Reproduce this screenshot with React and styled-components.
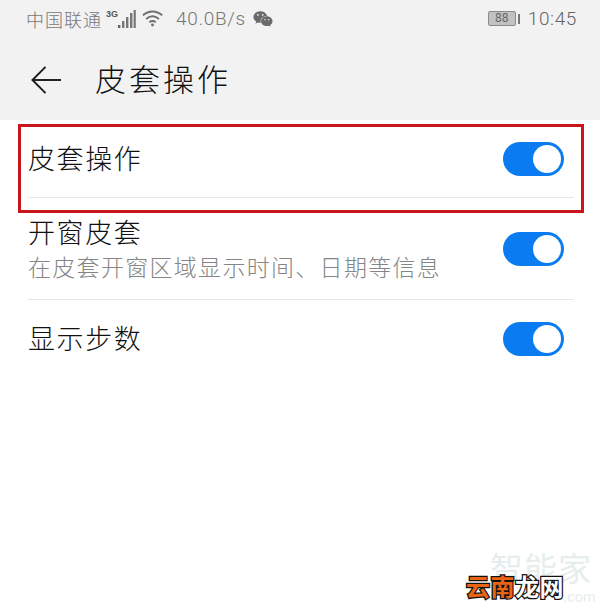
import React from "react";
import styled, { createGlobalStyle } from "styled-components";
import { FaWeixin } from "react-icons/fa";

const GlobalStyle = createGlobalStyle`
    html, body {
        margin: 0;
        padding: 0;
        background: #fff;
    }
    body {
        font-family: "Noto Sans CJK SC", "Noto Sans", sans-serif;
    }
`;

const Screen = styled.div`
    position: relative;
    width: 600px;
    height: 616px;
    overflow: hidden;
    background: #fff;
`;

const Head = styled.div`
    background: #f2f2f2;
    height: 120px;
`;

const StatusBar = styled.div`
    height: 40px;
    display: flex;
    align-items: center;
    padding: 0 23px 3px 26px;
    box-sizing: border-box;
    color: #767676;
`;

const Carrier = styled.span`
    font-size: 18px;
    letter-spacing: 1px;
    font-weight: 300;
`;

const NetLabel = styled.span`
    font-family: "Liberation Sans", sans-serif;
    font-size: 9px;
    font-weight: 700;
    margin: 0 0 10px 4px;
    color: #555;
`;

const Speed = styled.span`
    font-family: Roboto, sans-serif;
    font-size: 19px;
    font-weight: 300;
    margin-left: 12px;
    letter-spacing: 0.7px;
`;

const WechatSlot = styled.span`
    display: flex;
    margin-left: 7px;
    color: #6a6a6a;
    font-size: 20px;
`;

const Spacer = styled.div`
    flex: 1;
`;

const Battery = styled.div`
    display: flex;
    align-items: center;
    gap: 2px;
    margin-right: 8px;
`;

const BatteryBody = styled.div`
    width: 26px;
    height: 13px;
    border: 1px solid #8a8a8a;
    border-radius: 2px;
    background: #c2c2c2;
    font-family: Roboto, sans-serif;
    font-size: 12px;
    line-height: 13px;
    text-align: center;
    color: #666;
`;

const BatteryCap = styled.div`
    width: 2px;
    height: 10px;
    background: #777;
`;

const Clock = styled.span`
    font-family: Roboto, sans-serif;
    font-size: 19px;
    font-weight: 300;
    letter-spacing: 0.6px;
    color: #666;
`;

const TitleBar = styled.div`
    height: 80px;
    display: flex;
    align-items: center;
    padding: 0 0 0 31px;
    box-sizing: border-box;
`;

const BackButton = styled.div`
    display: flex;
    width: 31px;
    margin-right: 33px;
`;

const Title = styled.div`
    font-size: 31px;
    line-height: 40px;
    letter-spacing: 3px;
    font-weight: 300;
    color: #111;
    position: relative;
    top: -2px;
`;

const Row = styled.div`
    height: ${props => props.$height}px;
    margin: 0 26px 0 28px;
    display: flex;
    align-items: center;
    justify-content: space-between;
    box-sizing: border-box;
    border-bottom: ${props => props.$last ? "none" : "1px solid #e6e6e6"};
`;

const RowText = styled.div`
    display: flex;
    flex-direction: column;
    padding-bottom: 2px;
`;

const RowTitle = styled.div`
    font-size: 27px;
    line-height: 36px;
    letter-spacing: 1.6px;
    font-weight: 300;
    color: #111;
`;

const RowHint = styled.div`
    font-size: 23px;
    line-height: 32px;
    letter-spacing: 1.3px;
    font-weight: 300;
    color: #858585;
`;

const Switch = styled.div`
    width: 61px;
    height: 34px;
    margin-right: 10px;
    border-radius: 17px;
    background: #0a7bf0;
    box-sizing: border-box;
    padding: 3px;
    display: flex;
    justify-content: flex-end;
`;

const Knob = styled.div`
    width: 28px;
    height: 28px;
    border-radius: 50%;
    background: #fff;
`;

const Highlight = styled.div`
    position: absolute;
    left: 18px;
    top: 124px;
    width: 566px;
    height: 89px;
    box-sizing: border-box;
    border: 3px solid #c8161c;
`;

const Watermark = styled.div`
    position: absolute;
    left: 490px;
    top: 545px;
    color: #e6eeed;
    font-size: 33px;
    line-height: 44px;
    letter-spacing: 1px;
`;

const WatermarkDomain = styled.div`
    position: absolute;
    left: 563px;
    top: 588px;
    color: #e6eeed;
    font-family: "Liberation Sans", sans-serif;
    font-size: 15px;
`;

const SiteLogo = styled.div`
    position: absolute;
    left: 466px;
    top: 570px;
    font-size: 24px;
    line-height: 32px;
    font-weight: 700;
    letter-spacing: 0.5px;
    white-space: nowrap;
    -webkit-text-stroke: 2.5px #111;
    paint-order: stroke fill;
`;

const LogoPart = styled.span`
    color: ${props => props.$orange ? "#ea6414" : "#fff"};
`;

function SignalIcon() {
    return (
        <svg width="18" height="22" viewBox="0 0 18 22">
            <rect x="0" y="17" width="2.4" height="3" fill="#666" />
            <rect x="4" y="13" width="2.4" height="7" fill="#777" />
            <rect x="8" y="9" width="2.4" height="11" fill="#777" />
            <rect x="12" y="5" width="2.4" height="15" fill="#777" />
            <rect x="15.6" y="2" width="2.2" height="18" fill="#777" />
        </svg>
    );
}

function WifiIcon() {
    return (
        <svg width="22" height="19" viewBox="0 0 24 20" fill="none" stroke="#6f6f6f" strokeWidth="2" style={{ marginLeft: 6 }}>
            <path d="M1 6.5C7.5 1 15.5 1 22 6.5" />
            <path d="M4.5 10.5C9 6.8 14 6.8 18.5 10.5" />
            <path d="M8 14C10.2 12.4 12.8 12.4 15 14" />
            <circle cx="11.5" cy="17" r="1.6" fill="#6f6f6f" stroke="none" />
        </svg>
    );
}

function BackArrow() {
    return (
        <svg width="31" height="30" viewBox="0 0 32 30" fill="none" stroke="#1c1c1c" strokeWidth="2">
            <path d="M1.5 15H31" />
            <path d="M15 1.5L1.5 15L15 28.5" />
        </svg>
    );
}

function Toggle() {
    return (
        <Switch>
            <Knob />
        </Switch>
    );
}

export default function App() {
    return (
        <Screen>
            <GlobalStyle />
            <Head>
                <StatusBar>
                    <Carrier>中国联通</Carrier>
                    <NetLabel>3G</NetLabel>
                    <SignalIcon />
                    <WifiIcon />
                    <Speed>40.0B/s</Speed>
                    <WechatSlot><FaWeixin /></WechatSlot>
                    <Spacer />
                    <Battery>
                        <BatteryBody>88</BatteryBody>
                        <BatteryCap />
                    </Battery>
                    <Clock>10:45</Clock>
                </StatusBar>
                <TitleBar>
                    <BackButton><BackArrow /></BackButton>
                    <Title>皮套操作</Title>
                </TitleBar>
            </Head>
            <Row $height={78}>
                <RowText>
                    <RowTitle>皮套操作</RowTitle>
                </RowText>
                <Toggle />
            </Row>
            <Row $height={102}>
                <RowText>
                    <RowTitle>开窗皮套</RowTitle>
                    <RowHint>在皮套开窗区域显示时间、日期等信息</RowHint>
                </RowText>
                <Toggle />
            </Row>
            <Row $height={78} $last>
                <RowText>
                    <RowTitle>显示步数</RowTitle>
                </RowText>
                <Toggle />
            </Row>
            <Highlight />
            <Watermark>智能家</Watermark>
            <WatermarkDomain>.com</WatermarkDomain>
            <SiteLogo>
                <LogoPart $orange>云南</LogoPart>
                <LogoPart>龙网</LogoPart>
            </SiteLogo>
        </Screen>
    );
}
